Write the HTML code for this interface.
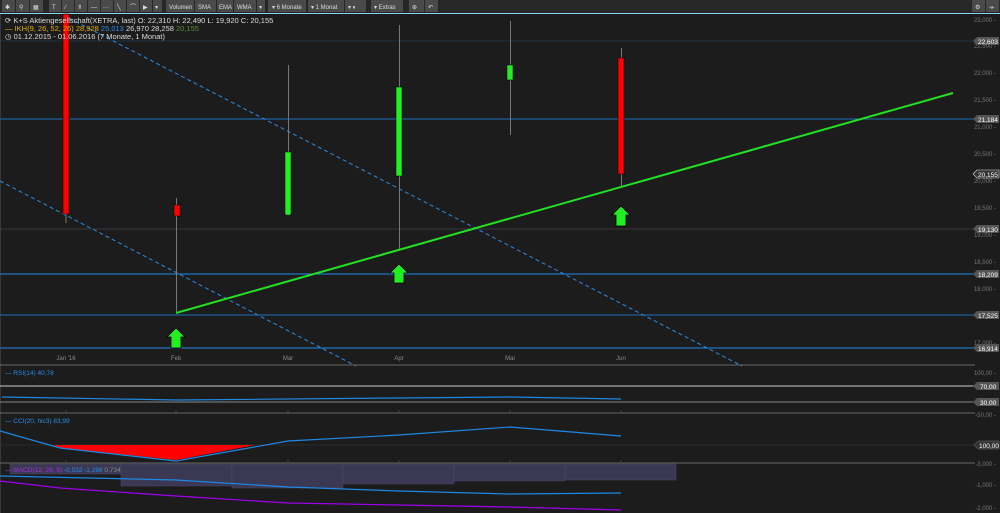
<!DOCTYPE html>
<html><head><meta charset="utf-8"><style>
html,body{margin:0;padding:0;background:#1c1c1c;width:1000px;height:513px;overflow:hidden}
svg{display:block;font-family:"Liberation Sans",sans-serif}
</style></head><body>
<svg width="1000" height="513" viewBox="0 0 1000 513" xmlns="http://www.w3.org/2000/svg">
<rect x="0" y="0" width="1000" height="513" fill="#1d1c1c"/>
<rect x="0" y="0" width="1000" height="13" fill="#272727"/>
<g fill="#4a4a4a">
<rect x="2" y="0" width="13" height="12"/><rect x="16" y="0" width="13" height="12"/><rect x="30" y="0" width="13" height="12"/>
<rect x="49" y="0" width="12" height="12"/><rect x="62" y="0" width="12" height="12"/><rect x="75" y="0" width="12" height="12"/><rect x="88" y="0" width="12" height="12"/><rect x="101" y="0" width="12" height="12"/><rect x="114" y="0" width="12" height="12"/><rect x="127" y="0" width="12" height="12"/><rect x="140" y="0" width="12" height="12"/><rect x="153" y="0" width="9" height="12"/>
<rect x="166" y="0" width="28" height="12"/><rect x="195" y="0" width="21" height="12"/><rect x="217" y="0" width="16" height="12"/><rect x="234" y="0" width="22" height="12"/><rect x="257" y="0" width="8" height="12"/>
<rect x="268" y="0" width="38" height="12"/><rect x="308" y="0" width="36" height="12"/><rect x="345" y="0" width="21" height="12"/>
<rect x="371" y="0" width="32" height="12"/><rect x="409" y="0" width="15" height="12"/><rect x="425" y="0" width="13" height="12"/>
<rect x="972" y="0" width="13" height="12"/><rect x="986" y="0" width="13" height="12"/>
</g>
<g fill="#ddd" font-size="6">
<text x="5" y="9">✱</text><text x="19" y="9">⚲</text><text x="33" y="9">▦</text>
<text x="52" y="9">T</text><text x="65" y="9">⁄</text><text x="78" y="9">⫪</text><text x="91" y="9">—</text><text x="103" y="9">···</text><text x="117" y="9">╲</text><text x="130" y="9">⌒</text><text x="143" y="9">▶</text><text x="155" y="9">▾</text>
<text x="169" y="9">Volumen</text><text x="198" y="9">SMA</text><text x="219" y="9">EMA</text><text x="237" y="9">WMA</text><text x="259" y="9">▾</text>
<text x="272" y="9">▾ 6 Monate</text><text x="311" y="9">▾ 1 Monat</text><text x="348" y="9">▾  ⏸</text>
<text x="374" y="9">▾ Extras</text><text x="412" y="9">⊕</text><text x="428" y="9">↶</text>
<text x="975" y="9">⚙</text><text x="989" y="9">⟛</text>
</g>
<line x1="0" y1="13.5" x2="1000" y2="13.5" stroke="#8ad0f0" stroke-width="1"/>

<line x1="0" y1="41" x2="975" y2="41" stroke="#1c3345"/>
<line x1="0" y1="119" x2="975" y2="119" stroke="#1a6fb8"/>
<line x1="0" y1="229" x2="975" y2="229" stroke="#33383e"/>
<line x1="0" y1="274" x2="975" y2="274" stroke="#1e88e5"/>
<line x1="0" y1="315" x2="975" y2="315" stroke="#1a6fb8"/>
<line x1="0" y1="348" x2="975" y2="348" stroke="#1e88e5"/>

<line x1="63" y1="15" x2="742" y2="366" stroke="#2a8ce8" stroke-width="1" stroke-dasharray="4,3"/>
<line x1="0" y1="181" x2="356" y2="366" stroke="#2a8ce8" stroke-width="1" stroke-dasharray="4,3"/>

<g stroke="#777" stroke-width="1">
<line x1="66" y1="14" x2="66" y2="223"/>
<line x1="176.5" y1="198" x2="176.5" y2="313"/>
<line x1="288.5" y1="65" x2="288.5" y2="214"/>
<line x1="399.5" y1="25" x2="399.5" y2="250"/>
<line x1="510.5" y1="21" x2="510.5" y2="135"/>
<line x1="621.5" y1="48" x2="621.5" y2="187"/>
</g>
<rect x="63" y="14" width="6" height="200" fill="#ff0000" stroke="#000" stroke-width="0.5"/>
<rect x="174" y="205" width="6" height="11" fill="#ff0000" stroke="#000" stroke-width="0.5"/>
<rect x="285" y="152" width="6" height="63" fill="#22ee22" stroke="#000" stroke-width="0.5"/>
<rect x="396" y="87" width="6" height="89" fill="#22ee22" stroke="#000" stroke-width="0.5"/>
<rect x="507" y="65" width="6" height="15" fill="#22ee22" stroke="#000" stroke-width="0.5"/>
<rect x="618" y="58" width="6" height="116" fill="#ff0000" stroke="#000" stroke-width="0.5"/>

<line x1="176" y1="313" x2="953" y2="93" stroke="#22e022" stroke-width="2"/>

<g fill="#22ee22" stroke="#000" stroke-width="0.8">
<path d="M176,328 L185,337 L181,337 L181,348 L171,348 L171,337 L167,337 Z"/>
<path d="M399,264 L408,273 L404,273 L404,283 L394,283 L394,273 L390,273 Z"/>
<path d="M621,206 L630,215 L626,215 L626,226 L616,226 L616,215 L612,215 Z"/>
</g>

<g font-size="7.5" fill="#ddd">
<text x="5" y="23">⟳ K+S Aktiengesellschaft(XETRA, last)  O: 22,310  H: 22,490  L: 19,920  C: 20,155</text>
<text x="5" y="31"><tspan fill="#e8b000">— IKH(9, 26, 52, 26) 28,928</tspan> <tspan fill="#2a8ce8">25,013</tspan> 26,970  28,258 <tspan fill="#5c8a3a">20,155</tspan></text>
<text x="5" y="39">◷ 01.12.2015 - 01.06.2016 (7 Monate, 1 Monat)</text>
</g>
<line x1="0" y1="14" x2="0" y2="513" stroke="#555"/>

<g font-size="6" fill="#888" text-anchor="middle">
<text x="66" y="360">Jan '16</text><text x="176" y="360">Feb</text><text x="288" y="360">Mar</text><text x="399" y="360">Apr</text><text x="510" y="360">Mai</text><text x="621" y="360">Jun</text>
</g>
<line x1="0" y1="365" x2="975" y2="365" stroke="#666"/>

<text x="5" y="375" font-size="6.5" fill="#2a8ce8">— RSI(14)  40,78</text>
<line x1="0" y1="386" x2="975" y2="386" stroke="#ccc"/>
<line x1="0" y1="402" x2="975" y2="402" stroke="#888"/>
<polyline points="2,397 176,400 399,398 510,397 621,399" fill="none" stroke="#1e88e5" stroke-width="1.2"/>
<line x1="0" y1="413" x2="975" y2="413" stroke="#666"/>

<text x="5" y="423" font-size="6.5" fill="#2a8ce8">— CCI(20, hlc3)  83,99</text>
<line x1="0" y1="445" x2="975" y2="445" stroke="#2a2a2a"/>
<path d="M54,445 L60,448 L176,460 L255,445 Z" fill="#ff0000"/>
<polyline points="0,431 60,448 176,461 288,441 399,435 510,427 621,436" fill="none" stroke="#1e88e5" stroke-width="1.2"/>
<line x1="0" y1="463" x2="975" y2="463" stroke="#666"/>

<g fill="#3a3852" stroke="#4a4868" stroke-width="0.5">
<rect x="10" y="464" width="111" height="10"/>
<rect x="121" y="464" width="111" height="22"/>
<rect x="232" y="464" width="111" height="24"/>
<rect x="343" y="464" width="111" height="20"/>
<rect x="454" y="464" width="111" height="17"/>
<rect x="565" y="464" width="111" height="16"/>
</g>
<text x="5" y="472" font-size="6.5" fill="#a030e0">— MACD(12, 26, 9)  <tspan fill="#2a8ce8">-0,532  -1,298</tspan>  <tspan fill="#888">0,734</tspan></text>
<polyline points="0,476 176,480 288,487 399,491 510,494 621,493" fill="none" stroke="#1e88e5" stroke-width="1.2"/>
<polyline points="0,481 60,488 176,496 288,503 399,505 510,507 621,510" fill="none" stroke="#a000ee" stroke-width="1.2"/>

<g stroke="#444">
<line x1="66" y1="410" x2="66" y2="413"/><line x1="176" y1="410" x2="176" y2="413"/><line x1="288" y1="410" x2="288" y2="413"/><line x1="399" y1="410" x2="399" y2="413"/><line x1="510" y1="410" x2="510" y2="413"/><line x1="621" y1="410" x2="621" y2="413"/>
<line x1="66" y1="460" x2="66" y2="463"/><line x1="176" y1="460" x2="176" y2="463"/><line x1="288" y1="460" x2="288" y2="463"/><line x1="399" y1="460" x2="399" y2="463"/><line x1="510" y1="460" x2="510" y2="463"/><line x1="621" y1="460" x2="621" y2="463"/>
</g>

<g font-size="6" fill="#777" text-anchor="end">
<text x="996" y="22">23,000 -</text><text x="996" y="48">22,500 -</text><text x="996" y="75">22,000 -</text><text x="996" y="102">21,500 -</text><text x="996" y="129">21,000 -</text><text x="996" y="156">20,500 -</text><text x="996" y="183">20,000 -</text><text x="996" y="210">19,500 -</text><text x="996" y="237">19,000 -</text><text x="996" y="264">18,500 -</text><text x="996" y="291">18,000 -</text><text x="996" y="345">17,000 -</text>
<text x="996" y="375">100,00 -</text><text x="996" y="417">-50,00 -</text><text x="996" y="466">-3,000 -</text><text x="996" y="487">-1,000 -</text><text x="996" y="510">-2,000 -</text>
</g>
<g font-size="6.5" fill="#fff">
<g><path d="M973,41 L977,37 L999,37 L999,45 L977,45 Z" fill="#555"/><text x="978" y="44">22,603</text></g>
<g><path d="M973,119 L977,115 L999,115 L999,123 L977,123 Z" fill="#555"/><text x="978" y="122">21,184</text></g>
<g><path d="M973,174 L977,170 L999,170 L999,178 L977,178 Z" fill="#333" stroke="#ddd" stroke-width="0.6"/><text x="978" y="177">20,155</text></g>
<g><path d="M973,229 L977,225 L999,225 L999,233 L977,233 Z" fill="#555"/><text x="978" y="232">19,130</text></g>
<g><path d="M973,274 L977,270 L999,270 L999,278 L977,278 Z" fill="#555"/><text x="978" y="277">18,209</text></g>
<g><path d="M973,315 L977,311 L999,311 L999,319 L977,319 Z" fill="#555"/><text x="978" y="318">17,525</text></g>
<g><path d="M973,348 L977,344 L999,344 L999,352 L977,352 Z" fill="#555"/><text x="978" y="351">16,914</text></g>
<g><path d="M973,386 L977,382 L999,382 L999,390 L977,390 Z" fill="#555"/><text x="980" y="389">70,00</text></g>
<g><path d="M973,402 L977,398 L999,398 L999,406 L977,406 Z" fill="#555"/><text x="980" y="405">30,00</text></g>
<g><path d="M974,445 L978,441 L999,441 L999,449 L978,449 Z" fill="#333" stroke="#777" stroke-width="0.5"/><text x="979" y="448">100,00</text></g>
</g>
</svg>
</body></html>
